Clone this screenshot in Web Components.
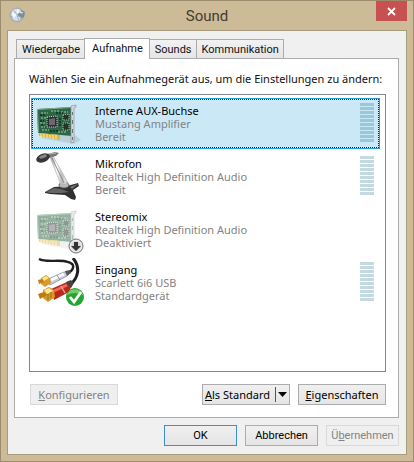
<!DOCTYPE html>
<html lang="de">
<head>
<meta charset="utf-8">
<meta name="viewport" content="width=device-width, initial-scale=1">
<title>Sound</title>
<style>
  body {
    margin: 0;
    font: 11px/13px "Noto Sans", "Open Sans", sans-serif;
    color: #111;
  }
</style>
</head>
<body>
<sound-window caption="Sound">
  <tab-strip>
    <tab-button>Wiedergabe</tab-button>
    <tab-button active>Aufnahme</tab-button>
    <tab-button>Sounds</tab-button>
    <tab-button>Kommunikation</tab-button>
  </tab-strip>
  <tab-panel>
    <span slot="hint">Wählen Sie ein Aufnahmegerät aus, um die Einstellungen zu ändern:</span>
    <device-item icon="card" name="Interne AUX-Buchse" driver="Mustang Amplifier" state="Bereit" meter selected></device-item>
    <device-item icon="mic" name="Mikrofon" driver="Realtek High Definition Audio" state="Bereit" meter></device-item>
    <device-item icon="card-off" name="Stereomix" driver="Realtek High Definition Audio" state="Deaktiviert"></device-item>
    <device-item icon="cable" name="Eingang" driver="Scarlett 6i6 USB" state="Standardgerät" meter></device-item>
    <dialog-button slot="left" wide disabled><u>K</u>onfigurieren</dialog-button>
    <dialog-button slot="right" wide menu><u>A</u>ls Standard</dialog-button>
    <dialog-button slot="right" wide><u>E</u>igenschaften</dialog-button>
  </tab-panel>
  <dialog-button slot="footer" primary compact>OK</dialog-button>
  <dialog-button slot="footer" compact>Abbrechen</dialog-button>
  <dialog-button slot="footer" compact disabled>Ü<u>b</u>ernehmen</dialog-button>
</sound-window>

<script>
(function () {
  // clones a template into an open shadow root
  function attach(host, html) {
    const template = document.createElement('template');
    template.innerHTML = html;
    host.attachShadow({ mode: 'open' });
    host.shadowRoot.append(template.content.cloneNode(true));
  }

  const card = `
    <g transform="translate(0 6)">
    <path d="M5 33 L38 39 L45 35 L39 30 L12 27Z" fill="#777" opacity=".2"/>
    <path d="M1 4 L36 2 L36 31 L2 28Z" fill="#2d6644"/>
    <path d="M1 4 L36 2 L36 3 L2 5 L3 27 L2 28Z" fill="#7da889"/>
    <path d="M3 28 L24 30 L24 35 L3 31Z" fill="#d6b945"/>
    <path d="M5 29v3M8 29v3M11 29v4M14 30v3M17 30v4M20 30v4" stroke="#fff0a0" stroke-width="1"/>
    <path d="M5 8h7M15 6h8M5 13h5M25 7h7M4 18h5M5 22h4M6 25h7M22 27h8" stroke="#a5c5a4" stroke-width="1" stroke-dasharray="2 1"/>
    <path d="M4 10h6M20 8h7M4 16h4M5 20h3M14 26h8M24 13v9" stroke="#143c28" stroke-width="2" stroke-dasharray="2 1"/>
    <path d="M11 12 L21 11 L21 22 L11 22Z" fill="#27302e" stroke="#c9d5c5" stroke-width="1" stroke-dasharray="1 1"/>
    <path d="M13 14 L19 13 L19 20 L13 20Z" fill="#6b6671"/>
    <path d="M27 10 L33 9 L33 15 L27 15Z M27 18h6v7h-6Z" fill="#26322b" stroke="#b3c6ae" stroke-width="1" stroke-dasharray="1 1"/>
    <path d="M35 1 L40 0 L40 2 L38 3 L38 37 L35 38Z" fill="#d2d6d9" stroke="#8f979c" stroke-width=".7"/>
    <path d="M36.5 7v3M36.5 15v4M36.5 24v4M36.5 32v3" stroke="#6c7278" stroke-width="1"/>
    </g>`;

  const icons = {
    'card': card,
    'card-off': `
      <g opacity=".5">${card}</g>
      <circle cx="40" cy="41" r="7" fill="#d8d8d8" stroke="#777"/>
      <circle cx="40" cy="41" r="5.6" fill="none" stroke="#f3f3f3"/>
      <path d="M38 37h4v4h3l-5 5l-5-5h3Z" fill="#333"/>`,
    'mic': `
      <defs><linearGradient id="arm"><stop stop-color="#999"/><stop offset=".4" stop-color="#fff"/><stop offset=".7" stop-color="#bbb"/><stop offset="1" stop-color="#eee"/></linearGradient></defs>
      <path d="M9 40 L18 35 L31 34 L42 31 L43 34 L37 38 L40 45 L39 48 L35 47 L29 43 L14 42 L9 41Z" fill="#303030"/>
      <path d="M10 40 L18 36 L25 37 L33 40 L25 41 L14 41Z" fill="#666"/>
      <path d="M34 35 L42 32 L36 37Z" fill="#777"/>
      <ellipse cx="28" cy="33" rx="5" ry="3" fill="#bbb" stroke="#666"/>
      <path d="M14 5 L17 4 L31 29 L30 32 L25 33Z" fill="url(#arm)" stroke="#aaa" stroke-width=".6"/>
      <path d="M16 6 L28 31" stroke="#777" stroke-width=".8"/>
      <path d="M11 2 L19 0 L23 1 L20 4 L12 6Z" fill="#777"/>
      <path d="M13 2 L20 1" stroke="#bbb"/>
      <ellipse cx="7" cy="6" rx="7" ry="4.2" transform="rotate(-20 7 6)" fill="#363636"/>
      <ellipse cx="7" cy="4.5" rx="4" ry="1.6" transform="rotate(-20 7 4.5)" fill="#858585"/>`,
    'cable': `
      <path d="M3 1 C10 5 24 1 32 4 C40 6 38 12 31 16" fill="none" stroke="#202020" stroke-width="2.4"/>
      <path d="M37 0 C45 10 42 20 34 27" fill="none" stroke="#202020" stroke-width="3"/>
      <path d="M10 22 L28 14 L32 14 L31 18 L14 27Z" fill="#c7d0df" stroke="#788090" stroke-width=".7"/>
      <path d="M15 22 L28 16" stroke="#fff" stroke-width="3"/>
      <path d="M21 17 L24 22" stroke="#8591a5"/>
      <path d="M29 13 L34 12 L35 15 L31 18Z" fill="#555"/>
      <path d="M5 20 L10 17 L14 20 L15 25 L9 29 L5 26Z" fill="#d79b27"/>
      <path d="M6 20 L10 18 L13 20 L8 23Z" fill="#ffe48a"/>
      <path d="M2 22 L6 21 L8 24 L3 26Z" fill="#c38018"/>
      <path d="M15 31 L31 24 L36 27 L33 34 L18 42Z" fill="#b9281c"/>
      <path d="M18 33 L31 27" stroke="#f06a55" stroke-width="3"/>
      <path d="M25 28 L29 35" stroke="#e6a095" stroke-width="1.5"/>
      <path d="M30 24 L35 22 L38 25 L35 30Z" fill="#444"/>
      <path d="M7 32 L13 29 L18 32 L19 39 L12 44 L7 40Z" fill="#d59928"/>
      <path d="M8 32 L13 30 L17 33 L11 36Z" fill="#ffe995"/>
      <path d="M2 36 L8 34 L11 37 L4 41Z" fill="#bd7c12"/>
      <path d="M12 36v6M15 34v6" stroke="#8f5b0c" stroke-width=".7"/>
      <circle cx="39" cy="39" r="9" fill="#25a532"/>
      <path d="M31 37 A8.5 8.5 0 0 1 47 37 Q39 33 31 37Z" fill="#74cc68"/>
      <path d="M34 39 L38 44 L45 34" fill="none" stroke="#fff" stroke-width="2.8"/>`
  };

  class SoundWindow extends HTMLElement {
    constructor() {
      super();
      attach(this, `
        <style>
          :host {
            display: flex;
            flex-direction: column;
            box-sizing: border-box;
            min-height: 100vh;
            padding: 0 6px 6px;
            background: #cdbb97;
            border: 1px solid #9b8c6e;
          }
          header {
            display: grid;
            grid-template-columns: 36px 1fr 36px;
            height: 29px;
          }
          header svg {
            margin: 5px 0 0 2px;
          }
          h1 {
            margin: 0;
            padding-top: 4px;
            font: 15px/22px Roboto, "Noto Sans", sans-serif;
            text-align: center;
            color: #433c30;
          }
          .close {
            width: 31px;
            height: 20px;
            margin-left: 5px;
            padding: 0;
            border: 0;
            background: #c75050;
          }
          .close svg {
            display: block;
            margin: 0 auto;
          }
          main {
            display: flex;
            flex-direction: column;
            flex: 1;
            padding: 7px 7px 8px 6px;
            background: #f0f0f0;
            border: 1px solid #a99b7d;
          }
          footer {
            display: flex;
            justify-content: flex-end;
            gap: 8px;
            padding-top: 7px;
          }
        </style>
        <header>
          <svg width="20" height="20" viewBox="0 0 20 20" aria-hidden="true">
            <circle cx="8" cy="9" r="7" fill="#b4c0c9" stroke="#a3a9aa"/>
            <path d="M4 3 L11 3 L13 9 L10 15 L5 14 L2 9Z" fill="#d5e0e8"/>
            <path d="M8 9 L4 3M8 9 L2 11M8 9 L10 15M8 9 L12 3" stroke="#98a6b3" stroke-width=".8"/>
            <path d="M3 6 L8 9 L4 12Z M8 3 L11 5 L8 8Z" fill="#f6faff"/>
            <circle cx="11" cy="9" r="2" fill="#7b8793"/>
            <path d="M12 4 L16 6 L15 11 L11 13 L13 9Z" fill="#7e8c99"/>
            <path d="M12 6 L14 6 L13 8Z" fill="#e6eef5"/>
          </svg>
          <h1></h1>
          <button class="close" aria-label="Schließen">
            <svg width="9" height="9" viewBox="0 0 9 9"><path d="M1 1 L8 8M8 1 L1 8" stroke="#fff" stroke-width="1.8"/></svg>
          </button>
        </header>
        <main>
          <slot></slot>
          <footer><slot name="footer"></slot></footer>
        </main>
      `);
      this.shadowRoot.querySelector('h1').textContent = this.getAttribute('caption');
    }
  }

  class TabStrip extends HTMLElement {
    constructor() {
      super();
      attach(this, `
        <style>
          :host {
            display: flex;
            align-items: flex-end;
            height: 20px;
            padding-left: 2px;
          }
        </style>
        <slot></slot>
      `);
      this.setAttribute('role', 'tablist');
    }
  }

  class TabButton extends HTMLElement {
    constructor() {
      super();
      attach(this, `
        <style>
          :host {
            display: block;
            margin-right: -1px;
          }
          button {
            display: block;
            height: 19px;
            padding: 0 4px 0 5px;
            font: 11px/17px Roboto, "Noto Sans", sans-serif;
            color: #111;
            background: linear-gradient(#f2f2f2, #e5e5e5);
            border: 1px solid #acacac;
            border-bottom: 0;
          }
          :host([active]) {
            z-index: 1;
            margin-bottom: -1px;
          }
          :host([active]) button {
            height: 21px;
            padding: 0 6px 2px 7px;
            background: #fff;
          }
        </style>
        <button role="tab"><slot></slot></button>
      `);
      this.shadowRoot.querySelector('button').setAttribute('aria-selected', this.hasAttribute('active'));
    }
  }

  class TabPanel extends HTMLElement {
    constructor() {
      super();
      attach(this, `
        <style>
          :host {
            display: flex;
            flex-direction: column;
            flex: 1;
            padding: 13px 12px 12px 14px;
            background: #fff;
            border: 1px solid #acacac;
          }
          .list {
            display: flex;
            flex-direction: column;
            flex: 1;
            gap: 2px;
            margin: 9px 0 12px;
            padding: 3px 5px 3px 1px;
            border: 1px solid #828790;
          }
          .buttons {
            display: flex;
            gap: 8px;
            padding-left: 1px;
          }
          .space {
            flex: 1;
          }
        </style>
        <slot name="hint"></slot>
        <div class="list" role="listbox"><slot></slot></div>
        <div class="buttons">
          <slot name="left"></slot>
          <span class="space"></span>
          <slot name="right"></slot>
        </div>
      `);
    }
  }

  class DeviceItem extends HTMLElement {
    constructor() {
      super();
      attach(this, `
        <style>
          :host {
            display: grid;
            grid-template-columns: 48px 1fr 14px;
            column-gap: 11px;
            box-sizing: border-box;
            height: 51px;
            padding: 0 5px 0 4px;
            border: 1px solid transparent;
          }
          :host([selected]) {
            background: #cbe8f6;
            border-color: #26a0da;
            outline: 1px dotted #0b2f4c;
            outline-offset: -2px;
          }
          p {
            margin: 0;
            color: #838383;
          }
          .text {
            padding-top: 5px;
          }
          .name {
            color: #000;
          }
          .meter {
            height: 39px;
            margin-top: 4px;
            background: repeating-linear-gradient(#c3dbe0 0 3px, transparent 3px 4px);
          }
          :host([selected]) .meter {
            background: repeating-linear-gradient(#99c9d9 0 3px, transparent 3px 4px);
          }
          :host(:not([meter])) .meter {
            display: none;
          }
        </style>
        <svg width="48" height="49" viewBox="0 0 48 49" aria-hidden="true">${icons[this.getAttribute('icon')]}</svg>
        <div class="text">
          <p class="name"></p>
          <p class="driver"></p>
          <p class="state"></p>
        </div>
        <div class="meter"></div>
      `);
      this.setAttribute('role', 'option');
      for (const key of ['name', 'driver', 'state']) {
        this.shadowRoot.querySelector('.' + key).textContent = this.getAttribute(key);
      }
    }
  }

  class DialogButton extends HTMLElement {
    constructor() {
      super();
      attach(this, `
        <style>
          :host {
            display: block;
          }
          button {
            display: flex;
            align-items: center;
            justify-content: center;
            width: 73px;
            height: 21px;
            padding: 0;
            font: inherit;
            color: #000;
            white-space: nowrap;
            background: linear-gradient(#f0f0f0, #e5e5e5);
            border: 1px solid #acacac;
          }
          :host([wide]) button {
            width: 88px;
          }
          :host([compact]) button {
            font-family: Roboto, "Noto Sans", sans-serif;
          }
          :host([primary]) button {
            border-color: #3c8fd0;
          }
          button:disabled {
            color: #838383;
            background: #efefef;
            border-color: #d9d9d9;
          }
          svg {
            display: none;
            margin-left: 5px;
          }
          :host([menu]) svg {
            display: block;
          }
        </style>
        <button>
          <span><slot></slot></span>
          <svg width="12" height="15" viewBox="0 0 12 15" aria-hidden="true"><path d="M.5 0v15" stroke="#555"/><path d="M3 5h9l-4.5 5Z" fill="#000"/></svg>
        </button>
      `);
      this.shadowRoot.querySelector('button').disabled = this.hasAttribute('disabled');
    }
  }

  customElements.define('sound-window', SoundWindow);
  customElements.define('tab-strip', TabStrip);
  customElements.define('tab-button', TabButton);
  customElements.define('tab-panel', TabPanel);
  customElements.define('device-item', DeviceItem);
  customElements.define('dialog-button', DialogButton);
})();
</script>
</body>
</html>
